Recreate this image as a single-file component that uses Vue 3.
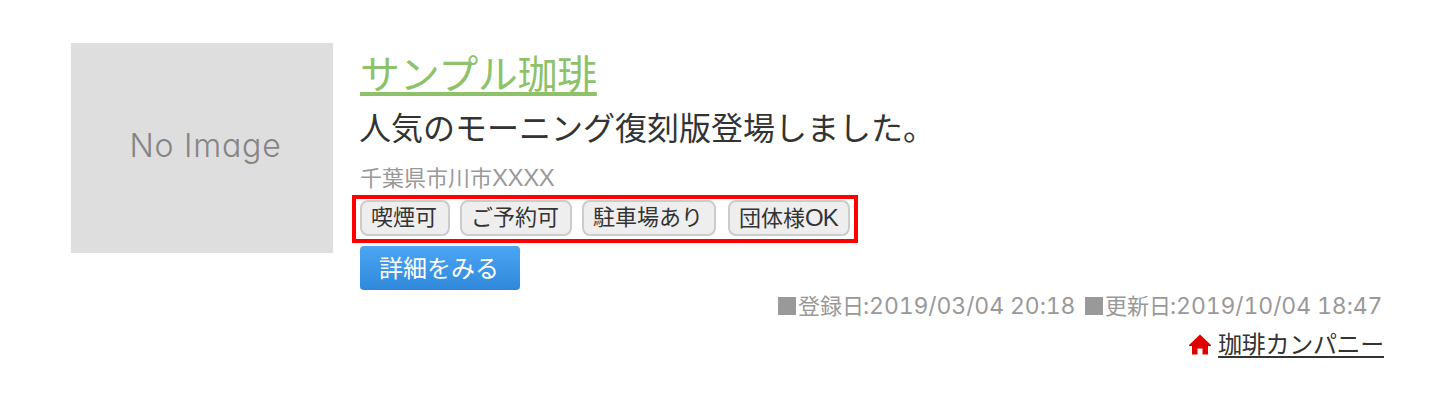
<script setup>
import { ref } from 'vue'

const shop = ref({
  name: 'サンプル珈琲',
  catch: '人気のモーニング復刻版登場しました。',
  area: '千葉県市川市',
  block: 'XXXX',
  company: '珈琲カンパニー'
})

const tags = ref([
  { label: '喫煙可' },
  { label: 'ご予約可' },
  { label: '駐車場あり' },
  { label: '団体様', latin: 'OK' }
])

const dates = ref([
  { label: '登録日', value: ':2019/03/04 20:18' },
  { label: '更新日', value: ':2019/10/04 18:47' }
])
</script>

<template>
  <div class="shop-card">
    <div class="thumbnail"><span>No Image</span></div>

    <div class="shop-body">
      <a class="shop-name">{{ shop.name }}</a>
      <p class="catch">{{ shop.catch }}</p>
      <p class="address">{{ shop.area }}<span class="block">{{ shop.block }}</span></p>

      <ul class="tag-list">
        <li v-for="tag in tags" :key="tag.label" class="tag">
          {{ tag.label }}<span v-if="tag.latin" class="latin">{{ tag.latin }}</span>
        </li>
      </ul>

      <button class="detail-button">詳細をみる</button>

      <div class="dates">
        <span v-for="date in dates" :key="date.label" class="date">
          <i class="square"></i>{{ date.label }}<span class="value">{{ date.value }}</span>
        </span>
      </div>

      <div class="company">
        <svg class="home-icon" width="22" height="22" viewBox="0 0 22 22">
          <path d="M11 0.5 L22 11 V12 H19 V20.5 H13.5 V14.5 H8.5 V20.5 H3 V12 H0 V11 Z" fill="#e00000" />
        </svg>
        <a class="company-name">{{ shop.company }}</a>
      </div>
    </div>
  </div>
</template>

<style>
body {
  margin: 0;
  background: #fff;
}
</style>

<style scoped>
.shop-card {
  display: flex;
  box-sizing: border-box;
  height: 400px;
  padding: 43px 72px 0 71px;
  color: #333;
  font-family: "Liberation Sans", "Noto Sans CJK JP", sans-serif;
}

.thumbnail {
  display: flex;
  align-items: center;
  justify-content: center;
  flex: none;
  width: 262px;
  height: 210px;
  margin-right: 19px;
  background: #dedede;
  color: #858585;
  font-family: Inter, sans-serif;
  font-size: 32px;
  font-weight: 300;
  font-feature-settings: "cv11";
  letter-spacing: 0.8px;
}

.thumbnail span {
  padding: 0 0 4px 7px;
  line-height: 40px;
  white-space: nowrap;
}

.shop-body {
  display: flex;
  flex: 1;
  flex-direction: column;
  align-items: flex-start;
}

.shop-name {
  margin-left: 8px;
  color: #8dc26a;
  font-size: 40px;
  line-height: 64px;
  letter-spacing: -0.33px;
  text-decoration: underline;
  text-decoration-thickness: 4px;
  text-underline-offset: 3px;
  text-decoration-skip-ink: none;
}

.catch {
  margin: -1px 0 0 7px;
  font-size: 32px;
  line-height: 46px;
}

.address {
  margin: 10px 0 0 8px;
  color: #999;
  font-size: 22px;
  line-height: 32px;
}

.block {
  font-size: 24px;
  letter-spacing: -0.4px;
}

.tag-list {
  display: flex;
  gap: 10px;
  box-sizing: border-box;
  width: 506px;
  height: 48px;
  margin: 0;
  padding: 1px 4px;
  border: 4px solid #f00;
  list-style: none;
}

.tag {
  box-sizing: border-box;
  height: 36px;
  padding: 0 9px;
  border: 2px solid #ccc;
  border-radius: 8px;
  background: #eee;
  font-size: 22px;
  line-height: 32px;
  white-space: nowrap;
}

.tag:not(:last-child) {
  padding-right: 11px;
}

.tag:last-child {
  width: 122px;
  margin-left: 2px;
  line-height: 31px;
}

.latin {
  font-size: 24px;
  letter-spacing: -1px;
}

.detail-button {
  width: 160px;
  height: 44px;
  margin: 3px 0 0 8px;
  padding: 2px 2px 0 0;
  border: 0;
  border-radius: 4px;
  background: linear-gradient(#4ca6f4, #2f88d9);
  color: #fff;
  font-family: inherit;
  font-size: 24px;
  line-height: 42px;
}

.dates {
  display: flex;
  align-self: flex-end;
  gap: 9px;
  margin-right: 1px;
  color: #999;
  font-size: 22px;
  line-height: 32px;
  white-space: nowrap;
}

.date {
  display: block;
  width: 298px;
  height: 32px;
}

.square {
  display: inline-block;
  width: 18px;
  height: 18px;
  margin-right: 2px;
  background: #999;
  vertical-align: -1px;
}

.value {
  margin-left: -1px;
  font-family: Inter, sans-serif;
  font-size: 23px;
  font-feature-settings: "tnum";
  letter-spacing: -0.1px;
}

.company {
  display: flex;
  align-self: flex-end;
  align-items: center;
  height: 36px;
  margin-top: 5px;
}

.home-icon {
  margin-right: 7px;
}

.company-name {
  font-size: 24px;
  line-height: 36px;
  letter-spacing: -0.3px;
  text-decoration: underline;
  text-decoration-thickness: 2px;
  text-underline-offset: 3px;
  text-decoration-skip-ink: none;
}
</style>
